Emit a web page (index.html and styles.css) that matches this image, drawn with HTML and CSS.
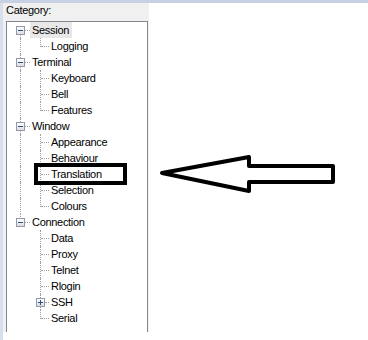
FILE: index.html
```html
<!DOCTYPE html>
<html>
<head>
    <link rel="stylesheet" href="styles.css">
</head>
<body>
    <div class="topbar"></div>
    <div class="main">
        <div class="edge"></div>
        <div class="panel">
            <div class="caption">Category:</div>
            <div class="tree">
                <div class="row root">
                    <span class="lead"><i class="v first"></i><i class="h"></i><i class="box minus"></i></span>
                    <span class="label sel">Session</span>
                </div>
                <div class="row child">
                    <span class="lead"><i class="v up"></i><i class="v sub last"></i><i class="h sub"></i></span>
                    <span class="label">Logging</span>
                </div>
                <div class="row root">
                    <span class="lead"><i class="v"></i><i class="h"></i><i class="box minus"></i></span>
                    <span class="label">Terminal</span>
                </div>
                <div class="row child">
                    <span class="lead"><i class="v up"></i><i class="v sub"></i><i class="h sub"></i></span>
                    <span class="label">Keyboard</span>
                </div>
                <div class="row child">
                    <span class="lead"><i class="v up"></i><i class="v sub"></i><i class="h sub"></i></span>
                    <span class="label">Bell</span>
                </div>
                <div class="row child">
                    <span class="lead"><i class="v up"></i><i class="v sub last"></i><i class="h sub"></i></span>
                    <span class="label">Features</span>
                </div>
                <div class="row root">
                    <span class="lead"><i class="v"></i><i class="h"></i><i class="box minus"></i></span>
                    <span class="label">Window</span>
                </div>
                <div class="row child">
                    <span class="lead"><i class="v up"></i><i class="v sub"></i><i class="h sub"></i></span>
                    <span class="label">Appearance</span>
                </div>
                <div class="row child">
                    <span class="lead"><i class="v up"></i><i class="v sub"></i><i class="h sub"></i></span>
                    <span class="label">Behaviour</span>
                </div>
                <div class="row child">
                    <span class="lead"><i class="v up"></i><i class="v sub"></i><i class="h sub"></i></span>
                    <span class="label">Translation</span>
                </div>
                <div class="row child">
                    <span class="lead"><i class="v up"></i><i class="v sub"></i><i class="h sub"></i></span>
                    <span class="label">Selection</span>
                </div>
                <div class="row child">
                    <span class="lead"><i class="v up"></i><i class="v sub last"></i><i class="h sub"></i></span>
                    <span class="label">Colours</span>
                </div>
                <div class="row root">
                    <span class="lead"><i class="v last"></i><i class="h"></i><i class="box minus"></i></span>
                    <span class="label">Connection</span>
                </div>
                <div class="row child">
                    <span class="lead"><i class="v sub"></i><i class="h sub"></i></span>
                    <span class="label">Data</span>
                </div>
                <div class="row child">
                    <span class="lead"><i class="v sub"></i><i class="h sub"></i></span>
                    <span class="label">Proxy</span>
                </div>
                <div class="row child">
                    <span class="lead"><i class="v sub"></i><i class="h sub"></i></span>
                    <span class="label">Telnet</span>
                </div>
                <div class="row child">
                    <span class="lead"><i class="v sub"></i><i class="h sub"></i></span>
                    <span class="label">Rlogin</span>
                </div>
                <div class="row child">
                    <span class="lead"><i class="v sub"></i><i class="h sub short"></i><i class="box plus sub"></i></span>
                    <span class="label">SSH</span>
                </div>
                <div class="row child">
                    <span class="lead"><i class="v sub last"></i><i class="h sub"></i></span>
                    <span class="label">Serial</span>
                </div>
            </div>
        </div>
    </div>

    <!-- marker drawn over the screenshot -->
    <svg class="marks" width="368" height="340" viewBox="0 0 368 340">
        <rect x="36" y="165" width="89" height="18" fill="none" stroke="#000" stroke-width="4"/>
        <polygon points="162,173 249,157 249,166 333,166 333,182 249,182 249,191"
                 fill="#fff" stroke="#000" stroke-width="4" stroke-linejoin="round"/>
    </svg>
</body>
</html>
```

FILE: styles.css
```css
body {
    margin: 0;
    width: 368px;
    height: 340px;
    background: #fff;
    font-family: "Liberation Sans", Arial, sans-serif;
    font-size: 11px;
    letter-spacing: -0.3px;
    color: #000;
    position: relative;
    overflow: hidden;
}
.topbar {
    height: 3px;
    background: #c7d1e3;
}
.main {
    display: flex;
    height: 337px;
}
.edge {
    width: 3px;
    background: #d7dfec;
}
.panel {
    width: 143px;
    height: 329px;
    padding-left: 3px;
    background: #f0f0f0;
    overflow: hidden;
}
.caption {
    margin-top: 1px;
    line-height: 13px;
    height: 13px;
}
.tree {
    margin-top: 4px;
    width: 140px;
    height: 330px;
    border: 1px solid #828790;
    background: #fff;
}
.row {
    display: flex;
    height: 16px;
    line-height: 16px;
    white-space: nowrap;
}
.lead {
    position: relative;
    flex: none;
    height: 16px;
}
.root .lead {
    width: 23px;
}
.child .lead {
    width: 42px;
}
.label {
    padding: 0 3px 0 2px;
}
.sel {
    background: #e8e8e8;
}

/* dotted guide lines */
.v {
    position: absolute;
    left: 13px;
    top: 0;
    height: 16px;
    border-left: 1px dotted #a0a0a0;
}
.v.first {
    top: 13px;
    height: 3px;
}
.v.last {
    height: 5px;
}
.v.sub {
    left: 33px;
}
.v.sub.last {
    height: 9px;
}
.h {
    position: absolute;
    top: 8px;
    left: 18px;
    width: 5px;
    border-top: 1px dotted #a0a0a0;
}
.h.sub {
    left: 34px;
    width: 8px;
}
.h.sub.short {
    left: 38px;
    width: 4px;
}

/* expand / collapse boxes */
.box {
    position: absolute;
    left: 9px;
    top: 4px;
    width: 7px;
    height: 7px;
    border: 1px solid #919aa8;
    background: linear-gradient(#ffffff, #dcdcdc);
}
.box.sub {
    left: 29px;
}
.box::before {
    content: "";
    position: absolute;
    left: 1px;
    top: 3px;
    width: 5px;
    height: 1px;
    background: #2c4f86;
}
.box.plus::after {
    content: "";
    position: absolute;
    left: 3px;
    top: 1px;
    width: 1px;
    height: 5px;
    background: #2c4f86;
}
.marks {
    position: absolute;
    left: 0;
    top: 0;
}
```
